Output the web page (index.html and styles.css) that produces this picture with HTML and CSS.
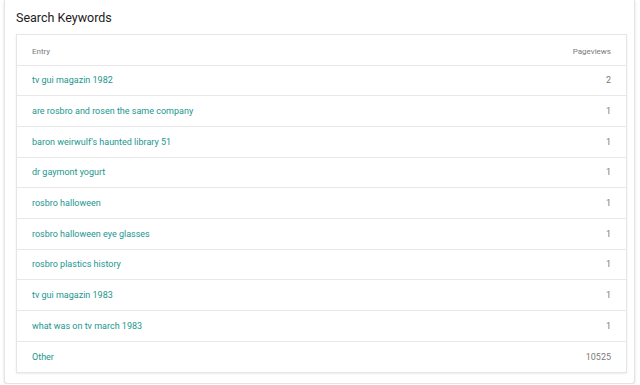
FILE: index.html
```html
<!DOCTYPE html>
<html lang="en">
<head>
    <meta charset="UTF-8">
    <meta name="viewport" content="width=device-width, initial-scale=1.0">
    <title>Search Keywords</title>
    <link rel="stylesheet" href="styles.css">
</head>
<body>
    <div class="card">
        <h2 class="card-title">Search Keywords</h2>

        <div class="table-wrap">
            <table class="keywords-table">
                <thead>
                    <tr>
                        <th>Entry</th>
                        <th>Pageviews</th>
                    </tr>
                </thead>
                <tbody>
                    <tr><td><a href="#">tv gui magazin 1982</a></td><td>2</td></tr>
                    <tr><td><a href="#">are rosbro and rosen the same company</a></td><td>1</td></tr>
                    <tr><td><a href="#">baron weirwulf's haunted library 51</a></td><td>1</td></tr>
                    <tr><td><a href="#">dr gaymont yogurt</a></td><td>1</td></tr>
                    <tr><td><a href="#">rosbro halloween</a></td><td>1</td></tr>
                    <tr><td><a href="#">rosbro halloween eye glasses</a></td><td>1</td></tr>
                    <tr><td><a href="#">rosbro plastics history</a></td><td>1</td></tr>
                    <tr><td><a href="#">tv gui magazin 1983</a></td><td>1</td></tr>
                    <tr><td><a href="#">what was on tv march 1983</a></td><td>1</td></tr>
                    <tr><td><a href="#">Other</a></td><td>10525</td></tr>
                </tbody>
            </table>
        </div>
    </div>
</body>
</html>
```

FILE: styles.css
```css
* {
    box-sizing: border-box;
    margin: 0;
    padding: 0;
}

body {
    background-color: white;
    font-family: Roboto, "Liberation Sans", Arial, sans-serif;
    padding: 0 5px 0 4px;
}

.card {
    background: white;
    border: 1px solid #e4e4e4;
    border-top: none;
    border-radius: 0 0 4px 4px;
    box-shadow: 0 1px 3px rgba(0, 0, 0, 0.12);
    padding: 0 7px 10px 11px;
}

.card-title {
    font-size: 12.5px;
    font-weight: normal;
    color: #212121;
    line-height: 33px;
    padding-top: 1px;
}

.table-wrap {
    border: 1px solid #e6e6e6;
    box-shadow: 0 1px 2px rgba(0, 0, 0, 0.08);
}

.keywords-table {
    width: 100%;
    border-collapse: collapse;
}

.keywords-table th {
    font-size: 8px;
    font-weight: normal;
    color: #7a7a7a;
    text-align: left;
    height: 30px;
    padding: 4px 15px 0;
    border-bottom: 1px solid #e8e8e8;
}

.keywords-table td {
    font-size: 9px;
    color: #7a7a7a;
    height: 30.7px;
    padding: 0 15px;
    border-bottom: 1px solid #e8e8e8;
}

.keywords-table tr:last-child td {
    border-bottom: none;
}

.keywords-table th:last-child,
.keywords-table td:last-child {
    text-align: right;
}

.keywords-table a {
    color: #1a968e;
    text-decoration: none;
}
```
